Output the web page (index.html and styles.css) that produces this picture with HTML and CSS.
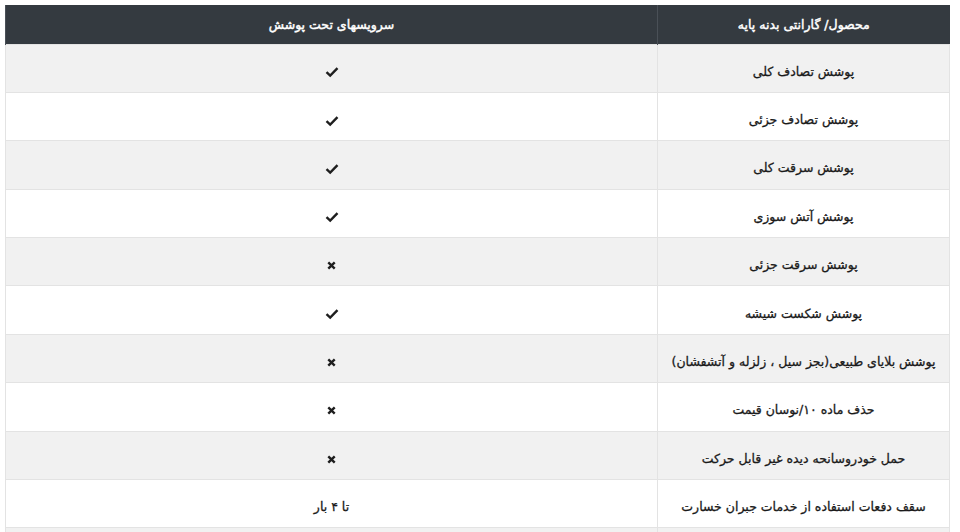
FILE: index.html
```html
<!DOCTYPE html>
<html lang="fa" dir="rtl">
<head>
<meta charset="utf-8">
<title>گارانتی بدنه پایه</title>
<link rel="stylesheet" href="styles.css">
</head>
<body>
<table class="cov">
  <thead>
    <tr><th class="c-name">محصول/ گارانتی بدنه پایه</th><th class="c-val">سرویسهای تحت پوشش</th></tr>
  </thead>
  <tbody>
    <tr><td>پوشش تصادف کلی</td><td><svg class="ic" viewBox="0 0 14 12"><path d="M1.5 6.2 L5.2 9.6 L12.5 2.2" /></svg></td></tr>
    <tr><td>پوشش تصادف جزئی</td><td><svg class="ic" viewBox="0 0 14 12"><path d="M1.5 6.2 L5.2 9.6 L12.5 2.2" /></svg></td></tr>
    <tr><td>پوشش سرقت کلی</td><td><svg class="ic" viewBox="0 0 14 12"><path d="M1.5 6.2 L5.2 9.6 L12.5 2.2" /></svg></td></tr>
    <tr><td>پوشش آتش سوزی</td><td><svg class="ic" viewBox="0 0 14 12"><path d="M1.5 6.2 L5.2 9.6 L12.5 2.2" /></svg></td></tr>
    <tr><td>پوشش سرقت جزئی</td><td><svg class="ic ic-x" viewBox="0 0 12 12"><path d="M2.5 2.5 L9.5 9.5 M9.5 2.5 L2.5 9.5" /></svg></td></tr>
    <tr><td>پوشش شکست شیشه</td><td><svg class="ic" viewBox="0 0 14 12"><path d="M1.5 6.2 L5.2 9.6 L12.5 2.2" /></svg></td></tr>
    <tr><td>پوشش بلایای طبیعی(بجز سیل ، زلزله و آتشفشان)</td><td><svg class="ic ic-x" viewBox="0 0 12 12"><path d="M2.5 2.5 L9.5 9.5 M9.5 2.5 L2.5 9.5" /></svg></td></tr>
    <tr><td>حذف ماده ۱۰/نوسان قیمت</td><td><svg class="ic ic-x" viewBox="0 0 12 12"><path d="M2.5 2.5 L9.5 9.5 M9.5 2.5 L2.5 9.5" /></svg></td></tr>
    <tr><td>حمل خودروسانحه دیده غیر قابل حرکت</td><td><svg class="ic ic-x" viewBox="0 0 12 12"><path d="M2.5 2.5 L9.5 9.5 M9.5 2.5 L2.5 9.5" /></svg></td></tr>
    <tr><td>سقف دفعات استفاده از خدمات جبران خسارت</td><td>تا ۴ بار</td></tr>
    <tr><td>&nbsp;</td><td>&nbsp;</td></tr>
  </tbody>
</table>
</body>
</html>
```
FILE: styles.css
```css
html, body {
  margin: 0;
  padding: 0;
  overflow: hidden;
  background: #ffffff;
}
body {
  padding: 5px 10px 0 5px;
  font-family: "DejaVu Sans", "Noto Sans", sans-serif;
  color: #222222;
}
.cov {
  width: 945px;
  border-collapse: collapse;
  table-layout: fixed;
  font-size: 12.5px;
}
.cov th {
  box-sizing: border-box;
  background: #343a40;
  color: #ffffff;
  font-size: 12.5px;
  font-weight: normal;
  -webkit-text-stroke: 0.45px #ffffff;
  height: 39px;
  padding: 0 4px;
  text-align: center;
  white-space: nowrap;
  border-left: 1px solid #4a5057;
}
.cov th.c-name { width: 292px; }
.cov td {
  height: 48.4px;
  box-sizing: border-box;
  padding: 6px 4px 0;
  text-align: center;
  white-space: nowrap;
  border: 1px solid #e3e3e3;
  font-weight: normal;
  color: #1a1a1a;
  -webkit-text-stroke: 0.3px #1a1a1a;
}
.cov tbody tr:nth-child(odd) td { background: #f1f1f1; }
.cov tbody tr:nth-child(even) td { background: #ffffff; }
.ic {
  width: 14px;
  height: 12px;
  display: inline-block;
  vertical-align: middle;
  fill: none;
  stroke: #1e1e1e;
  stroke-width: 2.4;
  stroke-linecap: butt;
}
.ic-x {
  width: 11px;
  height: 11px;
  stroke-width: 2.6;
}
```
